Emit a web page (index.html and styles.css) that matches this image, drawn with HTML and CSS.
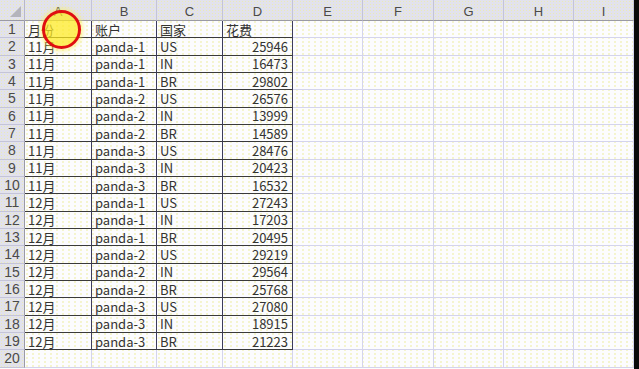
FILE: index.html
```html
<!DOCTYPE html>
<html lang="zh">
<head>
<meta charset="utf-8">
<link rel="stylesheet" href="styles.css">
</head>
<body>
<div class="page">
<div class="sheet">
  <div class="corner"><span class="tri"></span></div><div class="ch">A</div><div class="ch">B</div><div class="ch">C</div><div class="ch">D</div><div class="ch">E</div><div class="ch">F</div><div class="ch">G</div><div class="ch">H</div><div class="ch">I</div>

  <div class="rh">1</div><div class="c d">月份</div><div class="c d">账户</div><div class="c d">国家</div><div class="c d">花费</div><div class="c"></div><div class="c"></div><div class="c"></div><div class="c"></div><div class="c"></div>
  <div class="rh">2</div><div class="c d">11月</div><div class="c d">panda-1</div><div class="c d">US</div><div class="c d n">25946</div><div class="c"></div><div class="c"></div><div class="c"></div><div class="c"></div><div class="c"></div>
  <div class="rh">3</div><div class="c d">11月</div><div class="c d">panda-1</div><div class="c d">IN</div><div class="c d n">16473</div><div class="c"></div><div class="c"></div><div class="c"></div><div class="c"></div><div class="c"></div>
  <div class="rh">4</div><div class="c d">11月</div><div class="c d">panda-1</div><div class="c d">BR</div><div class="c d n">29802</div><div class="c"></div><div class="c"></div><div class="c"></div><div class="c"></div><div class="c"></div>
  <div class="rh">5</div><div class="c d">11月</div><div class="c d">panda-2</div><div class="c d">US</div><div class="c d n">26576</div><div class="c"></div><div class="c"></div><div class="c"></div><div class="c"></div><div class="c"></div>
  <div class="rh">6</div><div class="c d">11月</div><div class="c d">panda-2</div><div class="c d">IN</div><div class="c d n">13999</div><div class="c"></div><div class="c"></div><div class="c"></div><div class="c"></div><div class="c"></div>
  <div class="rh">7</div><div class="c d">11月</div><div class="c d">panda-2</div><div class="c d">BR</div><div class="c d n">14589</div><div class="c"></div><div class="c"></div><div class="c"></div><div class="c"></div><div class="c"></div>
  <div class="rh">8</div><div class="c d">11月</div><div class="c d">panda-3</div><div class="c d">US</div><div class="c d n">28476</div><div class="c"></div><div class="c"></div><div class="c"></div><div class="c"></div><div class="c"></div>
  <div class="rh">9</div><div class="c d">11月</div><div class="c d">panda-3</div><div class="c d">IN</div><div class="c d n">20423</div><div class="c"></div><div class="c"></div><div class="c"></div><div class="c"></div><div class="c"></div>
  <div class="rh">10</div><div class="c d">11月</div><div class="c d">panda-3</div><div class="c d">BR</div><div class="c d n">16532</div><div class="c"></div><div class="c"></div><div class="c"></div><div class="c"></div><div class="c"></div>
  <div class="rh">11</div><div class="c d">12月</div><div class="c d">panda-1</div><div class="c d">US</div><div class="c d n">27243</div><div class="c"></div><div class="c"></div><div class="c"></div><div class="c"></div><div class="c"></div>
  <div class="rh">12</div><div class="c d">12月</div><div class="c d">panda-1</div><div class="c d">IN</div><div class="c d n">17203</div><div class="c"></div><div class="c"></div><div class="c"></div><div class="c"></div><div class="c"></div>
  <div class="rh">13</div><div class="c d">12月</div><div class="c d">panda-1</div><div class="c d">BR</div><div class="c d n">20495</div><div class="c"></div><div class="c"></div><div class="c"></div><div class="c"></div><div class="c"></div>
  <div class="rh">14</div><div class="c d">12月</div><div class="c d">panda-2</div><div class="c d">US</div><div class="c d n">29219</div><div class="c"></div><div class="c"></div><div class="c"></div><div class="c"></div><div class="c"></div>
  <div class="rh">15</div><div class="c d">12月</div><div class="c d">panda-2</div><div class="c d">IN</div><div class="c d n">29564</div><div class="c"></div><div class="c"></div><div class="c"></div><div class="c"></div><div class="c"></div>
  <div class="rh">16</div><div class="c d">12月</div><div class="c d">panda-2</div><div class="c d">BR</div><div class="c d n">25768</div><div class="c"></div><div class="c"></div><div class="c"></div><div class="c"></div><div class="c"></div>
  <div class="rh">17</div><div class="c d">12月</div><div class="c d">panda-3</div><div class="c d">US</div><div class="c d n">27080</div><div class="c"></div><div class="c"></div><div class="c"></div><div class="c"></div><div class="c"></div>
  <div class="rh">18</div><div class="c d">12月</div><div class="c d">panda-3</div><div class="c d">IN</div><div class="c d n">18915</div><div class="c"></div><div class="c"></div><div class="c"></div><div class="c"></div><div class="c"></div>
  <div class="rh">19</div><div class="c d">12月</div><div class="c d">panda-3</div><div class="c d">BR</div><div class="c d n">21223</div><div class="c"></div><div class="c"></div><div class="c"></div><div class="c"></div><div class="c"></div>
  <div class="rh">20</div><div class="c"></div><div class="c"></div><div class="c"></div><div class="c"></div><div class="c"></div><div class="c"></div><div class="c"></div><div class="c"></div><div class="c"></div>
</div>
<div class="edge"></div>
<div class="cursor"></div>
</div>
</body>
</html>
```
FILE: styles.css
```css
* { box-sizing: border-box; }
html, body { margin: 0; padding: 0; }
body {
  width: 639px;
  height: 369px;
  overflow: hidden;
  background: #fcfcfe;
  font-family: "Noto Sans CJK SC", "Noto Sans", sans-serif;
}
.page {
  position: relative;
  display: flex;
  width: 639px;
  height: 369px;
  overflow: hidden;
}
.sheet {
  display: grid;
  width: 634px;
  grid-template-columns: 25px 67px 65px 66px 70px 70px 71px 70px 70px 60px;
  grid-template-rows: 21px repeat(20, 17.33px);
  background-color: #fcfcfe;
  background-image: radial-gradient(circle, rgba(230, 230, 120, 0.55) 0.6px, transparent 0.9px);
  background-size: 6px 4px;
}
.edge {
  width: 5px;
  background: #0a0a0a;
}
.corner, .ch, .rh {
  background-color: #e2e2ec;
  background-image: radial-gradient(circle, rgba(236, 236, 170, 0.8) 0.7px, transparent 1px);
  background-size: 3px 3px;
  color: #4a4a4a;
}
.corner {
  position: relative;
  border-right: 1px solid #b8b8c8;
  border-bottom: 1px solid #9a9aa4;
}
.tri {
  position: absolute;
  right: 3px;
  bottom: 3px;
  width: 0;
  height: 0;
  border-left: 11px solid transparent;
  border-bottom: 11px solid #b4b4bc;
}
.ch {
  display: flex;
  align-items: center;
  justify-content: center;
  font-family: "Liberation Sans", "Noto Sans", sans-serif;
  font-size: 13px;
  padding-top: 3px;
  border-right: 1px solid #c4c4d8;
  border-bottom: 1px solid #9a9aa4;
}
.rh {
  display: flex;
  align-items: center;
  justify-content: center;
  font-family: "Liberation Sans", "Noto Sans", sans-serif;
  font-size: 14px;
  line-height: 14px;
  border-right: 1px solid #9a9aa4;
  border-bottom: 1px solid #c4c4d8;
}
.c {
  border-right: 1px solid #d4d4ec;
  border-bottom: 1px solid #d4d4ec;
  font-size: 13px;
  line-height: 13px;
  color: #333;
  padding: 0 3px 0 3px;
  white-space: nowrap;
  display: flex;
  align-items: center;
}
.d {
  border-right-color: #3c3c5c;
  border-bottom-color: #3a3a3a;
}
.n {
  justify-content: flex-end;
  padding-right: 4px;
}
.cursor {
  position: absolute;
  left: 42px;
  top: 10px;
  width: 39px;
  height: 39px;
  border-radius: 50%;
  border: 3px solid #e01010;
  background: rgba(255, 234, 30, 0.72);
  box-shadow: 0 0 4px 2px rgba(255, 240, 80, 0.6);
}
```
